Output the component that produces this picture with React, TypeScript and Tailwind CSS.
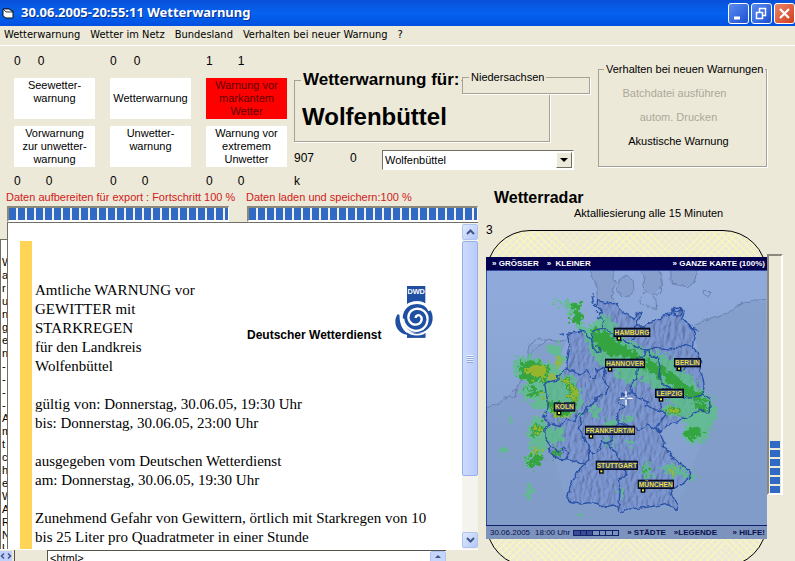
import React from "react";

const GERMANY =
  "M352 92 L375 97 L392 102 L412 100 L420 118 L428 128 L450 138 L462 145 L472 127 L486 130 L474 152 L468 168 L490 168 L508 158 L520 152 L545 148 L550 135 L575 132 L582 112 L600 112 L612 130 L605 150 L622 160 L636 172 L645 190 L640 210 L637 230 L655 250 L662 275 L660 300 L668 320 L672 345 L670 372 L688 385 L690 410 L686 430 L660 418 L630 440 L600 450 L560 468 L540 485 L530 475 L545 500 L555 520 L550 530 L570 550 L580 565 L600 580 L625 598 L632 612 L625 628 L600 645 L582 655 L570 660 L578 680 L592 700 L588 718 L575 712 L560 700 L530 707 L500 712 L470 715 L440 718 L425 730 L415 718 L400 705 L375 712 L350 700 L330 698 L300 702 L270 697 L262 690 L268 660 L278 630 L295 602 L318 582 L300 580 L270 570 L240 568 L215 555 L205 535 L212 528 L195 505 L195 480 L208 462 L190 440 L202 425 L205 400 L198 370 L195 345 L205 335 L235 330 L232 318 L258 300 L262 270 L268 240 L265 210 L262 195 L290 185 L315 185 L325 200 L335 210 L342 180 L365 175 L372 150 L358 135 L366 120 L352 108 Z";

const BORDERS = [
  "M365 175 L385 182 L400 198 L418 210 L440 215 L460 228 L480 235 L500 240 L530 232 L560 240 L590 235 L610 222 L637 230",
  "M468 168 L462 185 L466 200 L455 212",
  "M335 210 L338 235 L350 248 L364 245 L358 230 L345 228",
  "M500 240 L492 258 L470 262 L472 300 L470 325 L450 342 L454 368 L430 372 L418 385 L415 398 L432 412 L412 428 L415 460",
  "M500 240 L515 262 L535 262 L540 290 L536 322 L550 345 L580 355 L600 380 L640 385 L652 375 L670 372",
  "M454 368 L480 385 L505 395 L495 405 L530 420 L560 430 L545 450 L525 475 L500 465 L475 480 L450 470 L415 460",
  "M545 420 L538 380 L545 360 L580 355",
  "M258 300 L280 300 L300 315 L322 300 L332 325 L345 325 L350 298 L372 295 L376 315 L365 325 L386 350 L376 372 L350 382 L342 400 L322 410 L318 428 L295 430 L285 455 L262 448 L240 470 L212 462",
  "M322 410 L300 440 L304 460 L298 475 L312 500 L326 530 L326 570 L318 582",
  "M415 460 L395 478 L398 510 L378 520 L364 512 L358 540 L340 552 L328 540",
  "M378 520 L410 545 L420 575 L438 612 L432 622 L415 630 L420 660 L416 718",
  "M212 528 L238 545 L252 532 L266 548 L260 568",
  "M585 285 L605 280 L616 292 L608 305 L592 302 Z",
  "M580 118 L592 125 L602 120 L606 132 L596 142 L584 136 Z M612 150 L625 162 L638 175 L655 182",
  "M336 78 L340 95 L334 98 M342 100 L350 108 M348 122 L356 130 M350 140 L362 146 M338 70 L342 82",
  "M242 196 L252 194 M258 190 L272 188 M278 184 L294 184 M300 182 L314 186",
];

const NEIGHBOURS = [
  "M330 0 L336 22 L350 40 L352 92 M405 0 L398 25 L406 40 L400 62 L396 88 L412 100",
  "M418 28 L435 18 L460 32 L462 60 L450 78 L428 80 L412 62 Z",
  "M478 0 L492 18 L488 48 L500 66 L485 78 L478 98 L500 110 L530 116 L528 92 L520 78 L538 68 L548 40 L540 0",
  "M572 0 L574 42 L622 50 L646 36 L648 0 M670 62 L680 60 L692 70 L688 80 L670 74 Z",
  "M640 165 L700 142 L745 128 L780 102 L820 90 L858 92",
  "M18 415 L60 400 L78 382 L104 382 L112 360 L96 364 M104 382 L112 350 L136 320 L140 275 L146 225 L170 206 L200 210 L190 225 L170 235 L152 250 L146 268 M200 210 L236 214 L262 210",
];

const LIGHT = [
  "M215 88 L250 94 L276 100 L300 90 L310 118 L307 160 L330 172 L362 128 L385 140 L410 170 L440 205 L490 232 L545 248 L590 280 L625 310 L655 350 L690 380 L708 410 L700 470 L680 510 L640 524 L606 505 L615 450 L580 400 L530 355 L475 322 L455 345 L425 330 L400 300 L360 282 L330 250 L322 210 L300 182 L278 155 L262 118 Z",
  "M100 262 L160 255 L225 285 L245 308 L285 325 L304 375 L298 430 L240 448 L195 425 L165 420 L150 390 L122 372 L132 340 L102 300 Z",
  "M200 225 L235 220 L250 240 L258 280 L235 300 L218 285 L235 262 L205 245 Z",
  "M150 450 L175 430 L200 465 L245 478 L250 510 L225 530 L200 520 L190 560 L165 600 L134 590 L140 560 L160 540 L140 500 Z",
  "M540 590 L565 580 L600 590 L640 610 L655 628 L620 622 L560 612 Z",
  "M488 588 L505 578 L520 600 L512 624 L490 618 Z",
  "M135 640 L158 650 L155 690 L138 690 Z M60 540 L90 535 L88 555 L65 550 Z",
  "M540 405 L610 400 L605 440 L560 440 Z M375 450 L412 445 L408 475 L385 480 Z M330 415 L358 410 L356 442 L336 440 Z",
  "M418 655 L434 650 L430 685 L422 685 Z M438 510 L462 512 L455 532 L440 528 Z M290 728 L308 726 L302 742 Z M372 505 L398 512 L402 530 L378 524 Z M82 440 L100 445 L92 462 Z M425 440 L470 435 L462 455 L428 455 Z",
];

const STRONG = [
  "M280 98 L302 96 L302 125 L310 148 L298 168 L270 150 L280 125 Z",
  "M338 185 L345 176 L372 180 L400 205 L440 235 L480 262 L530 280 L585 315 L625 350 L665 372 L675 395 L640 390 L605 370 L560 335 L500 300 L450 268 L390 256 L345 235 Z",
  "M118 280 L165 270 L208 298 L200 328 L165 340 L125 325 Z",
  "M230 328 L262 322 L290 348 L290 395 L270 415 L272 365 L250 342 Z M130 350 L175 360 L192 384 L150 374 Z M205 390 L235 398 L272 425 L240 445 L205 425 Z",
  "M146 560 L178 542 L192 558 L165 598 L144 588 Z M158 470 L185 456 L192 480 L156 502 Z",
  "M610 480 L650 472 L674 488 L640 508 L615 502 Z M558 406 L592 410 L602 434 L566 432 Z M640 395 L680 400 L690 425 L660 425 Z",
  "M492 595 L506 588 L514 610 L496 614 Z M220 533 L242 540 L244 564 L220 560 Z",
];

const HOT = [
  "M136 300 L175 283 L200 300 L192 320 L150 324 Z",
  "M200 312 L238 318 L265 330 L288 362 L290 394 L278 390 L272 355 L250 335 L205 325 Z",
  "M563 410 L587 413 L594 430 L568 428 Z M213 400 L224 424 L240 436 L272 428 L262 442 L222 442 Z M222 275 L242 263 L240 290 Z",
  "M155 545 L180 533 L187 542 L160 558 Z M563 600 L582 597 L576 612 Z M173 368 L197 378 L190 388 Z M158 480 L180 468 L177 486 Z",
];

const CITIES = [
  { name: "HAMBURG", x: 402, y: 174, w: 108, px: 411 },
  { name: "HANNOVER", x: 376, y: 267, w: 118, px: 384 },
  { name: "BERLIN", x: 583, y: 265, w: 79, px: 591 },
  { name: "LEIPZIG", x: 526, y: 357, w: 85, px: 537 },
  { name: "KÖLN", x: 222, y: 398, w: 63, px: 231 },
  { name: "FRANKFURT/M", x: 316, y: 468, w: 148, px: 327 },
  { name: "STUTTGART", x: 348, y: 573, w: 125, px: 358 },
  { name: "MÜNCHEN", x: 474, y: 630, w: 107, px: 483 },
];

function RadarMap() {
  return (
    <svg viewBox="18 0 843 765" className="block h-[255px] w-full" role="img" aria-label="Wetterradar">
      <defs>
        <linearGradient id="sea" x1="0" y1="0" x2="0" y2="1">
          <stop offset="0" stopColor="#90abdb" />
          <stop offset="1" stopColor="#819dca" />
        </linearGradient>
        <filter id="ragged" x="-10%" y="-10%" width="120%" height="120%" colorInterpolationFilters="sRGB">
          <feTurbulence type="fractalNoise" baseFrequency="0.07" numOctaves="4" seed="4" result="n" />
          <feDisplacementMap in="SourceGraphic" in2="n" scale="48" xChannelSelector="R" yChannelSelector="G" />
        </filter>
        <filter id="coast" x="-5%" y="-5%" width="110%" height="110%" colorInterpolationFilters="sRGB">
          <feTurbulence type="fractalNoise" baseFrequency="0.06" numOctaves="2" seed="9" result="n" />
          <feDisplacementMap in="SourceGraphic" in2="n" scale="14" xChannelSelector="R" yChannelSelector="G" />
        </filter>
        <filter id="relief" x="0" y="0" width="100%" height="100%" colorInterpolationFilters="sRGB">
          <feTurbulence type="fractalNoise" baseFrequency="0.09 0.04" numOctaves="3" seed="12" result="n" />
          <feDiffuseLighting in="n" surfaceScale="6" lightingColor="#94abe2" result="l">
            <feDistantLight azimuth="200" elevation="60" />
          </feDiffuseLighting>
          <feComposite in="l" in2="SourceGraphic" operator="in" />
        </filter>
      </defs>
      <rect x="18" y="0" width="843" height="765" fill="url(#sea)" />
      <path
        d="M330 0 L336 22 L350 40 L352 92 L412 100 L396 88 L406 40 L398 25 L405 0 Z M478 0 L492 18 L488 48 L500 66 L520 78 L548 40 L540 0 Z M572 0 L574 42 L622 50 L646 36 L648 0 Z M418 28 L435 18 L460 32 L462 60 L450 78 L428 80 L412 62 Z"
        fill="#869fcd"
      />
      <path
        d="M858 92 L820 90 L780 102 L745 128 L700 142 L640 165 L672 345 L690 430 L632 612 L590 718 L262 697 L195 480 L205 335 L262 210 L146 225 L140 275 L112 350 L60 400 L18 415 L18 765 L861 765 Z"
        fill="#819bc9"
        opacity="0.7"
      />
      <path d={GERMANY} fill="#7390cf" />
      <path d={GERMANY} filter="url(#relief)" opacity="0.35" />
      <g filter="url(#coast)" fill="none" stroke="#6b80b0" strokeWidth="3">
        {NEIGHBOURS.map((d) => (
          <path key={d} d={d} />
        ))}
      </g>
      <g filter="url(#ragged)">
        <g fill="#5cc284" opacity="0.78">
          {LIGHT.map((d) => (
            <path key={d} d={d} />
          ))}
        </g>
        <g fill="#2fa236" opacity="0.88">
          {STRONG.map((d) => (
            <path key={d} d={d} />
          ))}
        </g>
        <g fill="#a2b62c" opacity="0.9">
          {HOT.map((d) => (
            <path key={d} d={d} />
          ))}
        </g>
      </g>
      <g filter="url(#coast)" fill="none" stroke="#2850a6" strokeWidth="4" strokeLinejoin="round">
        <path d={GERMANY} />
        {BORDERS.map((d) => (
          <path key={d} d={d} />
        ))}
      </g>
      <path d="M438 364 V381 M438 389 V406 M419 385 H434 M442 385 H458" stroke="#fff" strokeWidth="4" />
      {CITIES.map((c) => (
        <g key={c.name}>
          <rect x={c.x + 1} y={c.y + 1} width={c.w - 2} height="24" fill="#35466f" stroke="#060b20" strokeWidth="4" />
          <text
            x={c.x + c.w / 2}
            y={c.y + 20}
            textAnchor="middle"
            fontSize="20"
            fill="#e8dc4c"
            className="font-['Liberation_Sans',Arial,sans-serif] font-bold"
          >
            {c.name}
          </text>
          <rect x={c.px + 1} y={c.y + 26} width="10" height="10" fill="#f3ec5a" stroke="#000" strokeWidth="4" />
        </g>
      ))}
      <path d="M18 1 H861" stroke="#1c3494" strokeWidth="3" />
      <path d="M19 0 V765" stroke="#1c3a94" strokeWidth="3" />
    </svg>
  );
}

function DwdLogo() {
  return (
    <svg viewBox="0 0 120 156" className="h-[52px] w-10" role="img" aria-label="DWD">
      <rect x="42" y="0" width="55" height="155" fill="#1e4fa3" />
      <text x="69.500" y="25" textAnchor="middle" fontSize="22" fill="#fff" className="font-['Liberation_Sans',Arial,sans-serif] font-bold">
        DWD
      </text>
      <circle cx="72" cy="96" r="50" fill="#fff" />
      <path d="M14 84 C-4 112 14 148 52 147 C32 138 16 116 24 90 Z" fill="#1e4fa3" />
      <circle cx="74" cy="96" r="45" fill="#1e4fa3" />
      <g fill="none" stroke="#fff">
        <path d="M28 112 C14 82 36 50 72 50 C92 50 104 60 110 74" strokeWidth="8" />
        <path d="M30 98 C34 128 62 140 82 132 C106 122 110 92 94 76 C80 64 56 66 48 84 C42 100 52 116 68 116 C82 116 90 102 84 92 C78 84 68 88 68 96" strokeWidth="7" />
      </g>
      <rect x="42" y="140" width="55" height="15" fill="#1e4fa3" />
      <path d="M38 134 C58 150 86 150 104 134" fill="none" stroke="#fff" strokeWidth="5" />
    </svg>
  );
}

const ICON_BUTTON = "flex size-[21px] items-center justify-center rounded-[3px] border border-white";

function TitleBar() {
  return (
    <header className="flex h-[26px] shrink-0 items-center bg-linear-to-b from-[#0a50d8] via-[#0562f0] to-[#0150e0] pl-[2px]">
      <svg viewBox="0 0 12 11" className="mr-[7px] h-[11px] w-3" aria-hidden="true">
        <path d="M1 1 H7 L11 3 V10 H4 L1 8 Z" fill="#fff" stroke="#111" />
        <path d="M1 1 H7 L11 4 H4 Z" fill="#dff0f4" stroke="#111" strokeWidth="0.8" />
      </svg>
      <h1 className="grow whitespace-nowrap font-['Noto_Sans',sans-serif] text-[13px] font-bold text-white [text-shadow:1px_1px_0_#0a2f8c]">
        30.06.2005-20:55:11 Wetterwarnung
      </h1>
      <div className="flex gap-[2px]">
        <button aria-label="Minimieren" className={`${ICON_BUTTON} bg-linear-to-br from-[#5b8cf0] to-[#1c4fd0]`}>
          <svg viewBox="0 0 19 19" className="size-[19px]">
            <path d="M5 14 H11" stroke="#fff" strokeWidth="3" />
          </svg>
        </button>
        <button aria-label="Wiederherstellen" className={`${ICON_BUTTON} bg-linear-to-br from-[#5b8cf0] to-[#1c4fd0]`}>
          <svg viewBox="0 0 19 19" className="size-[19px]" fill="none" stroke="#fff">
            <path d="M4.500 8.500 H10.500 V14.500 H4.500 Z M4 8.500 H11 M7.500 8 V4.500 H13.500 V11.500 H11 M7 4.500 H14" strokeWidth="1.500" />
          </svg>
        </button>
        <button aria-label="Schließen" className={`${ICON_BUTTON} bg-linear-to-br from-[#ee8468] to-[#cc3c14]`}>
          <svg viewBox="0 0 19 19" className="size-[19px]">
            <path d="M5 5 L14 14 M14 5 L5 14" stroke="#fff" strokeWidth="2.200" />
          </svg>
        </button>
      </div>
    </header>
  );
}

const MENU = ["Wetterwarnung", "Wetter im Netz", "Bundesland", "Verhalten bei neuer Warnung", "?"];

function MenuBar() {
  return (
    <nav className="flex h-5 shrink-0 items-center gap-[10px] border-b border-white pl-1 font-['DejaVu_Sans_Condensed','DejaVu_Sans',sans-serif] text-[11px]">
      {MENU.map((m) => (
        <button key={m} className="whitespace-nowrap">
          {m}
        </button>
      ))}
    </nav>
  );
}

const STATUS = [
  { top: ["0", "0"], narrow: true, first: ["Seewetter-", "warnung"], second: ["Vorwarnung", "zur unwetter-", "warnung"] },
  { top: ["0", "0"], narrow: true, first: ["Wetterwarnung"], center: true, second: ["Unwetter-", "warnung"] },
  { top: ["1", "1"], alert: true, first: ["Warnung vor", "markantem", "Wetter"], second: ["Warnung vor", "extremem", "Unwetter"] },
];

function Lines({ lines }: { lines: string[] }) {
  return (
    <>
      {lines.map((l) => (
        <span key={l} className="block whitespace-nowrap">
          {l}
        </span>
      ))}
    </>
  );
}

function StatusGrid() {
  return (
    <section className="grid grid-cols-[81px_81px_81px] gap-x-[15px] pt-[7px] leading-[13px]">
      {STATUS.map((s) => (
        <div key={s.first[0]} className="text-center">
          <p className={`flex text-[12px] leading-4 ${s.narrow ? "gap-[17px]" : "gap-[25px]"}`}>
            <span>{s.top[0]}</span>
            <span>{s.top[1]}</span>
          </p>
          <div
            className={`mt-[9px] flex h-[41px] flex-col overflow-hidden ${s.center ? "justify-center" : "pt-px"} ${
              s.alert ? "bg-[#ff0000] text-[#5c0000]" : "bg-white"
            }`}
          >
            <Lines lines={s.first} />
          </div>
          <div className="mt-[7px] h-[41px] overflow-hidden bg-white pt-px">
            <Lines lines={s.second} />
          </div>
          <p className="mt-[6px] flex gap-[25px] text-[12px] leading-4">
            <span>0</span>
            <span>0</span>
          </p>
        </div>
      ))}
    </section>
  );
}

const GROUP = "border border-[#a5a294] shadow-[1px_1px_0_#fff]";

function Selection() {
  return (
    <section className="relative ml-[7px] w-[296px] pt-[25px]">
      <fieldset className={`h-[71px] w-[256px] ${GROUP}`}>
        <legend className="ml-[6px] px-[2px] text-[17px] font-bold leading-[18px]">Wetterwarnung für:</legend>
        <p className="pl-[7px] pt-[2px] text-[24px] font-bold leading-[52px]">Wolfenbüttel</p>
      </fieldset>
      <div className="absolute right-0 top-[24px] w-[128px] bg-[#ece9d8]">
        <fieldset className={`h-[24px] ${GROUP}`}>
          <legend className="ml-[6px] px-[2px] leading-[14px]">Niedersachsen</legend>
        </fieldset>
      </div>
      <div className="mt-[8px] flex items-start text-[12px]">
        <span className="w-[56px] leading-4">907</span>
        <span className="w-[32px] leading-4">0</span>
        <div className="relative h-5 w-[192px] border border-[#fff] border-l-[#716f64] border-t-[#716f64] bg-white">
          <select aria-label="Landkreis" className="h-[18px] w-full appearance-none bg-transparent pl-[2px] text-[11px] leading-[18px]">
            <option>Wolfenbüttel</option>
          </select>
          <span className="pointer-events-none absolute inset-y-px right-px flex w-4 items-center justify-center border border-white border-b-[#716f64] border-r-[#716f64] bg-[#ece9d8]">
            <svg viewBox="0 0 8 4" className="h-1 w-2">
              <path d="M0 0 H8 L4 4 Z" />
            </svg>
          </span>
        </div>
      </div>
      <p className="mt-[3px] text-[12px] leading-4">k</p>
    </section>
  );
}

function Behaviour() {
  return (
    <fieldset className={`ml-[8px] mt-[16px] h-[105px] w-[169px] ${GROUP}`}>
      <legend className="ml-[5px] whitespace-nowrap px-[2px] leading-[14px]">Verhalten bei neuen Warnungen</legend>
      <div className="flex flex-col items-center pr-[8px] pt-[5px] leading-6">
        <button disabled className="-ml-2 text-[#aca899]">
          Batchdatei ausführen
        </button>
        <button disabled className="text-[#aca899]">
          autom. Drucken
        </button>
        <button>Akustische Warnung</button>
      </div>
    </fieldset>
  );
}

function Progress({ label }: { label: string }) {
  return (
    <div className="min-w-0">
      <p className="-ml-px whitespace-nowrap leading-[14px] text-[#d02020]">{label}</p>
      <div
        role="progressbar"
        aria-label={label}
        aria-valuenow={100}
        className="mt-[2px] flex h-4 gap-[2px] overflow-hidden border-b-2 border-r border-t-2 border-l-2 border-b-white border-l-[#8b897c] border-r-white border-t-[#8b897c] bg-[#f4f2e8]"
      >
        {Array.from({ length: 40 }, (_, i) => (
          <span key={i} className="w-[7px] shrink-0 bg-[#316ac5]" />
        ))}
      </div>
    </div>
  );
}

const SCROLL_BUTTON = "flex h-4 shrink-0 items-center justify-center rounded-[2px] border border-[#b0c4f0] bg-linear-to-br from-[#dfe8ff] to-[#b4c8f8]";

function Chevron({ d }: { d: string }) {
  return (
    <svg viewBox="0 0 9 6" className="h-[6px] w-[9px]" fill="none" stroke="#3f5688" strokeWidth="2">
      <path d={d} />
    </svg>
  );
}

const SIDE_TEXT = "W a r u n g e n - - - - A m t c h e W A R N U".split(" ");

function Report() {
  return (
    <div className="flex min-h-0 grow">
      <div className="mt-[17px] w-[7px] shrink-0 overflow-hidden border-l border-t border-[#716f64] bg-white pl-px pt-4 leading-[13px]">
        {SIDE_TEXT.map((c, i) => (
          <span key={i} className="block">
            {c}
          </span>
        ))}
      </div>
      <article className="flex min-w-0 grow border-l border-t border-[#716f64] bg-white pl-3">
        <div className="mt-[18px] w-3 shrink-0 bg-[#ffd457]" />
        <div className="min-w-0 grow overflow-hidden pl-[3px] pt-[58px] font-['Liberation_Serif','Times_New_Roman',serif] text-[15px] leading-[19px]">
          <div className="flex h-[95px]">
            <h2 className="w-[184px]">
              Amtliche WARNUNG vor
              <br />
              GEWITTER mit
              <br />
              STARKREGEN
              <br />
              für den Landkreis
              <br />
              Wolfenbüttel
            </h2>
            <div className="flex h-[62px] items-end gap-3 pl-7">
              <p className="whitespace-nowrap font-['Liberation_Sans',Arial,sans-serif] text-[12px] font-bold leading-4">Deutscher Wetterdienst</p>
              <div className="mb-[5px] shrink-0">
                <DwdLogo />
              </div>
            </div>
          </div>
          <p className="mt-[19px]">
            gültig von: Donnerstag, 30.06.05, 19:30 Uhr
            <br />
            bis: Donnerstag, 30.06.05, 23:00 Uhr
          </p>
          <p className="mt-[19px]">
            ausgegeben vom Deutschen Wetterdienst
            <br />
            am: Donnerstag, 30.06.05, 19:30 Uhr
          </p>
          <p className="mt-[19px]">
            Zunehmend Gefahr von Gewittern, örtlich mit Starkregen von 10
            <br />
            bis 25 Liter pro Quadratmeter in einer Stunde
          </p>
        </div>
        <div className="flex w-4 shrink-0 flex-col bg-[#f4f3ee] py-px">
          <button aria-label="Nach oben" className={SCROLL_BUTTON}>
            <Chevron d="M1 5 L4.500 1.500 L8 5" />
          </button>
          <div className="mt-px flex grow-[4] flex-col items-center justify-center gap-px rounded-[2px] border border-[#98b0e8] bg-linear-to-r from-[#cddbff] to-[#b9cbf8]">
            {[0, 1, 2, 3].map((i) => (
              <span key={i} className="h-px w-[6px] bg-[#eef4ff] shadow-[0_1px_0_#8ca6e0]" />
            ))}
          </div>
          <div className="grow" />
          <button aria-label="Nach unten" className={SCROLL_BUTTON}>
            <Chevron d="M1 1 L4.500 4.500 L8 1" />
          </button>
        </div>
      </article>
    </div>
  );
}

function SourceRow() {
  return (
    <div className="flex h-3 shrink-0 overflow-hidden border-t border-white">
      <div className="flex w-[15px] items-start border-r border-[#55534a] pt-px">
        <svg viewBox="0 0 12 10" className="h-[10px] w-3" aria-hidden="true">
          <rect width="12" height="10" fill="#c0d0fa" />
          <path d="M4 2.500 L1.500 5 L4 7.500 M8 2.500 L10.500 5 L8 7.500" fill="none" stroke="#3f5688" strokeWidth="1.500" />
        </svg>
      </div>
      <div className="ml-8 flex grow border-l border-t border-[#55534a] bg-white pl-[2px]">
        <span className="grow leading-[14px]">&lt;html&gt;</span>
        <button aria-label="Quelltext nach oben" className="flex h-4 w-4 justify-center rounded-[2px] border border-[#b0c4f0] bg-[#c6d5fc] pt-[3px]">
          <svg viewBox="0 0 6 3" className="h-[3px] w-[6px]">
            <path d="M0 3 L3 0 L6 3 Z" fill="#3f5688" />
          </svg>
        </button>
      </div>
      <div className="w-8 shrink-0" />
    </div>
  );
}

function Radar() {
  return (
    <section className="pl-2 pr-3">
      <h2 className="pl-2 text-[16px] font-bold leading-4">Wetterradar</h2>
      <p className="pl-[88px] leading-[14px]">Aktalliesierung alle 15 Minuten</p>
      <div className="mt-[10px] flex items-start">
        <div className="relative h-[337px] min-w-0 grow rounded-[44px] border border-black bg-[#ece9d8] bg-[repeating-linear-gradient(45deg,#f8f5bd_0_1px,transparent_1px_5px),repeating-linear-gradient(-45deg,#f8f5bd_0_1px,transparent_1px_5px)] pt-[26px]">
          <span className="absolute -left-px -top-[9px] text-[12px] leading-4">3</span>
          <div className="-mx-px font-bold text-[8px]">
            <div className="flex h-[13px] items-center gap-2 whitespace-nowrap bg-[#02004f] pl-[6px] pr-[2px] text-white">
              <a href="#groesser">» GRÖSSER</a>
              <a href="#kleiner">»&nbsp; KLEINER</a>
              <a href="#karte" className="ml-auto">
                » GANZE KARTE (100%)
              </a>
            </div>
            <RadarMap />
            <div className="flex h-[14px] items-center whitespace-nowrap border-t border-[#10206a] bg-[#7c93bd] pl-1 pr-[2px] text-[#08104e]">
              <span className="font-normal">30.06.2005</span>
              <span className="ml-[5px] font-normal">18:00 Uhr</span>
              <span className="ml-[3px] flex h-[6px] w-[46px] border border-[#10206a]">
                {[0, 1, 2, 3, 4, 5, 6].map((i) => (
                  <span key={i} className={`grow border-r border-[#10206a] last:border-r-0 ${i < 3 ? "bg-[#3a4a94]" : ""}`} />
                ))}
              </span>
              <a href="#staedte" className="ml-2">
                » STÄDTE
              </a>
              <a href="#legende" className="ml-2">
                »LEGENDE
              </a>
              <a href="#hilfe" className="ml-auto">
                » HILFE!
              </a>
            </div>
          </div>
        </div>
        <div
          role="progressbar"
          aria-label="Aktualisierung"
          aria-valuenow={22}
          className="mt-6 flex h-[241px] w-4 shrink-0 flex-col justify-end gap-[2px] border-2 border-b-white border-l-[#8b897c] border-r-white border-t-[#8b897c] px-px"
        >
          {[0, 1, 2, 3, 4, 5].map((i) => (
            <span key={i} className="h-[7px] shrink-0 bg-[#316ac5]" />
          ))}
        </div>
      </div>
    </section>
  );
}

export default function App() {
  return (
    <div className="flex h-screen flex-col overflow-hidden bg-[#ece9d8] font-['Liberation_Sans',Arial,sans-serif] text-[11px] text-black">
      <TitleBar />
      <MenuBar />
      <div className="flex h-[144px] shrink-0 pl-[14px]">
        <StatusGrid />
        <Selection />
        <Behaviour />
      </div>
      <main className="grid min-h-0 grow grid-cols-[478fr_317fr] grid-rows-[minmax(0,1fr)]">
        <div className="flex min-h-0 min-w-0 flex-col">
          <div className="grid shrink-0 grid-cols-[222fr_231fr] gap-[18px] pl-[7px]">
            <Progress label="Daten aufbereiten für export : Fortschritt 100 %" />
            <Progress label="Daten laden und speichern:100 %" />
          </div>
          <Report />
          <SourceRow />
        </div>
        <Radar />
      </main>
    </div>
  );
}
